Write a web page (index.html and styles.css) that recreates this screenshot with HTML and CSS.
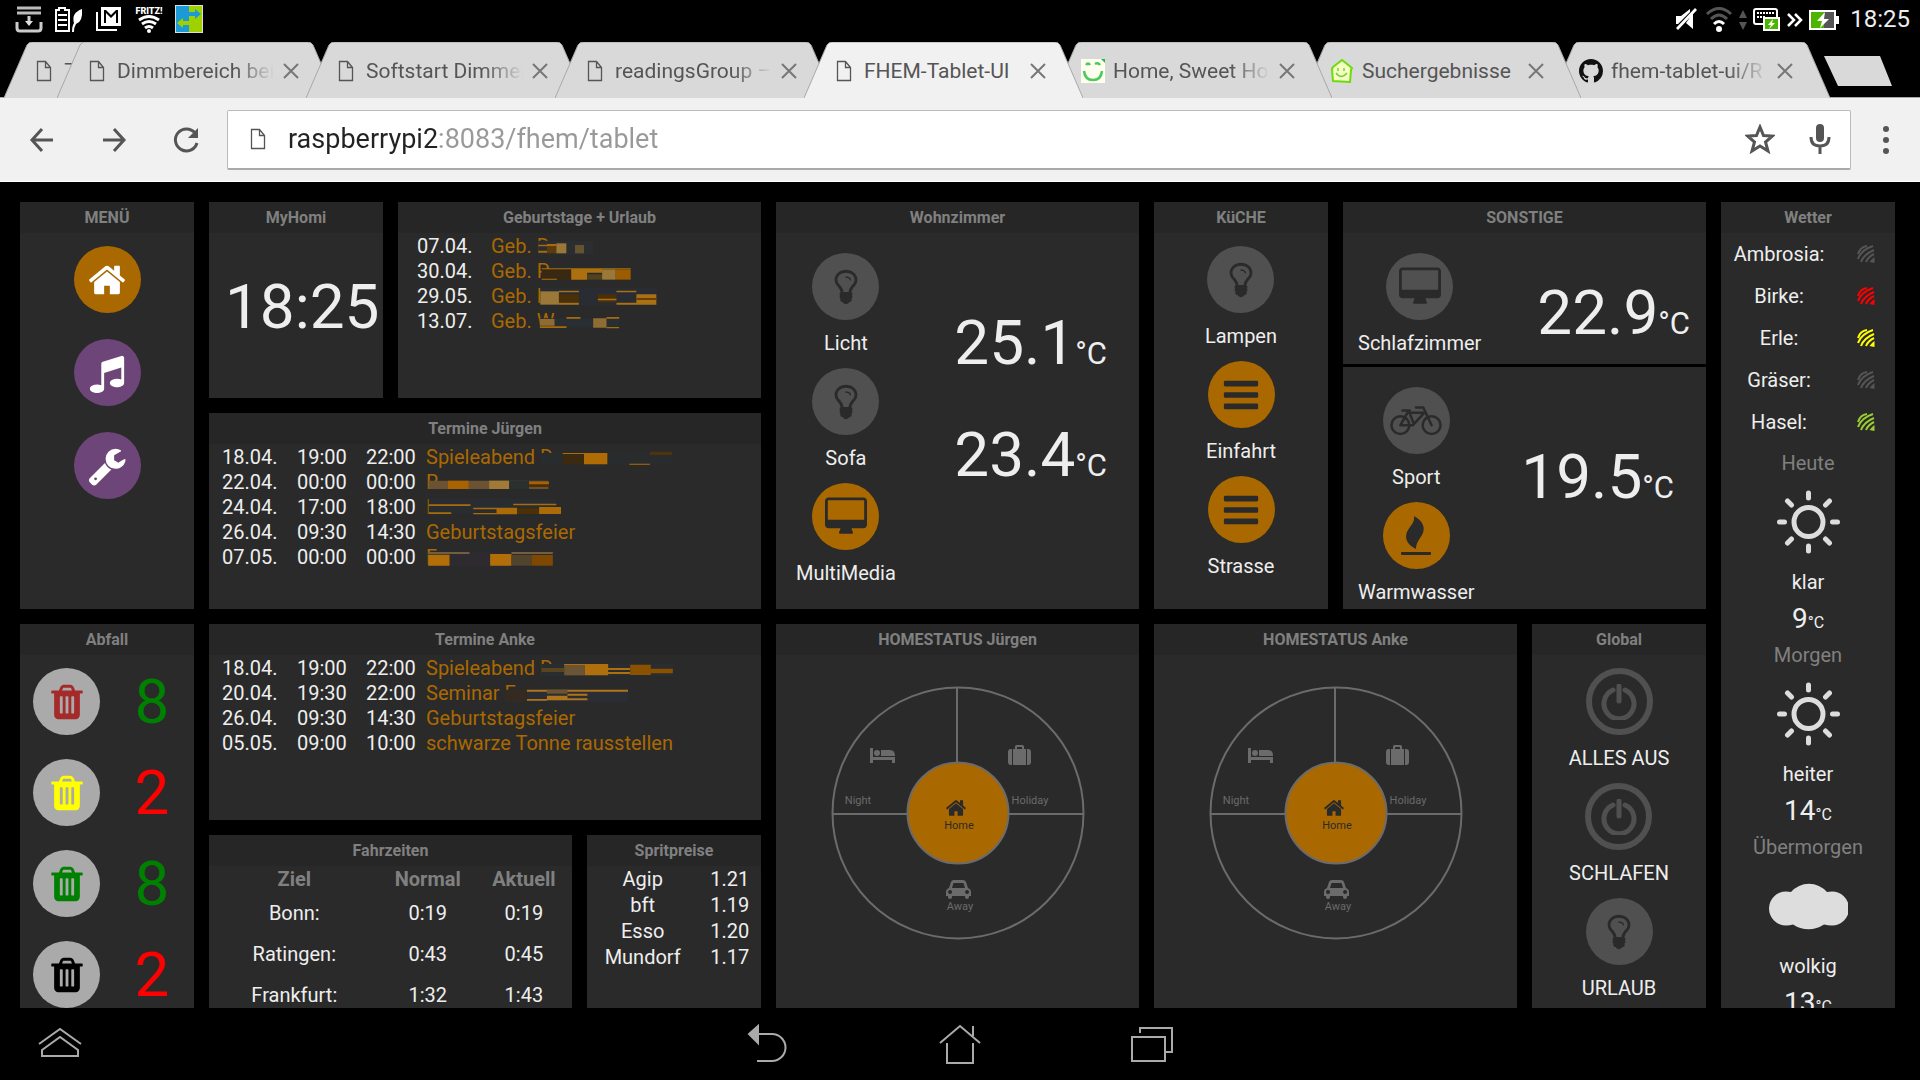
FILE: index.html
```html
<!DOCTYPE html>
<html lang="de">
<head>
    <meta charset="UTF-8">
    <meta name="viewport" content="width=device-width, initial-scale=1.0">
    <title>FHEM-Tablet-UI</title>
    <link rel="stylesheet" href="styles.css">
</head>
<body>
    <!-- icon sprite -->
    <svg class="sprite" aria-hidden="true">
        <symbol id="i-home" viewBox="0 0 1792 1792"><path d="M1472 992v480q0 26-19 45t-45 19h-384v-384h-256v384h-384q-26 0-45-19t-19-45v-480q0-1 .5-3t.5-3l575-474 575 474q1 2 1 6zm223-69l-62 74q-8 9-21 11h-3q-13 0-21-7l-692-577-692 577q-12 8-24 7-13-2-21-11l-62-74q-8-10-7-23.5t11-21.5l719-599q32-26 76-26t76 26l244 204v-195q0-14 9-23t23-9h192q14 0 23 9t9 23v408l219 182q10 8 11 21.5t-7 23.5z"/></symbol>
        <symbol id="i-music" viewBox="0 0 1792 1792"><path d="M1664 224v1120q0 50-34 89t-86 60.5-103.5 32-96.5 10.5-96.5-10.5-103.5-32-86-60.5-34-89 34-89 86-60.5 103.5-32 96.5-10.5q105 0 192 39v-537l-768 237v709q0 50-34 89t-86 60.5-103.5 32-96.5 10.5-96.5-10.5-103.5-32-86-60.5-34-89 34-89 86-60.5 103.5-32 96.5-10.5q105 0 192 39v-967q0-31 19-56.5t49-35.5l832-256q12-4 28-4 40 0 68 28t28 68z"/></symbol>
        <symbol id="i-wrench" viewBox="0 0 1792 1792"><path d="M448 1472q0-26-19-45t-45-19-45 19-19 45 19 45 45 19 45-19 19-45zm644-420l-682 682q-37 37-90 37-52 0-91-37l-106-108q-38-36-38-90 0-53 38-91l681-681q39 98 114.5 173.5t173.5 114.5zm634-435q0 39-23 106-47 134-164.5 217.5t-258.5 83.5q-185 0-316.5-131.5t-131.5-316.5 131.5-316.5 316.5-131.5q58 0 121.5 16.5t107.5 46.5q16 11 16 28t-16 28l-293 169v224l193 107q5-3 79-48.5t135.5-81 70.5-35.5q15 0 23.5 10t8.5 25z"/></symbol>
        <symbol id="i-bulb" viewBox="0 0 1792 1792"><path d="M1120 576q0 13-9.5 22.5t-22.5 9.5-22.5-9.5-9.5-22.5q0-46-54-71t-106-25q-13 0-22.5-9.5t-9.5-22.5 9.5-22.5 22.5-9.5q50 0 99.5 16t87 54 37.5 90zm160 0q0-72-34.5-134t-90-101.5-123-62-136.5-22.5-136.5 22.5-123 62-90 101.5-34.5 134q0 101 68 180 10 11 30.5 33t30.5 33q128 153 141 298h228q13-145 141-298 10-11 30.5-33t30.5-33q68-79 68-180zm128 0q0 155-103 268-45 49-74.5 87t-59.5 95.5-34 107.5q47 28 47 82 0 37-25 64 25 27 25 64 0 52-45 81 13 23 13 47 0 46-31.5 71t-77.5 25q-20 44-60 70t-87 26-87-26-60-70q-46 0-77.5-25t-31.5-71q0-24 13-47-45-29-45-81 0-37 25-64-25-27-25-64 0-54 47-82-4-50-34-107.5t-59.5-95.5-74.5-87q-103-113-103-268 0-99 44.5-184.5t117-142 164-89 186.5-32.5 186.5 32.5 164 89 117 142 44.5 184.5z"/></symbol>
        <symbol id="i-desktop" viewBox="-64 0 1920 1792"><path d="M1728 992v-832q0-13-9.5-22.5t-22.5-9.5h-1600q-13 0-22.5 9.5t-9.5 22.5v832q0 13 9.5 22.5t22.5 9.5h1600q13 0 22.5-9.5t9.5-22.5zm128-832v1088q0 66-47 113t-113 47h-544q0 37 16 77.5t32 71 16 43.5q0 26-19 45t-45 19h-512q-26 0-45-19t-19-45q0-14 16-44t32-70 16-78h-544q-66 0-113-47t-47-113v-1088q0-66 47-113t113-47h1600q66 0 113 47t47 113z"/></symbol>
        <symbol id="i-bars" viewBox="0 0 1792 1792"><rect x="128" y="256" width="1536" height="256" rx="60"/><rect x="128" y="768" width="1536" height="256" rx="60"/><rect x="128" y="1280" width="1536" height="256" rx="60"/></symbol>
        <symbol id="i-trash" viewBox="0 0 1792 1792"><path d="M704 1376v-704q0-14-9-23t-23-9h-64q-14 0-23 9t-9 23v704q0 14 9 23t23 9h64q14 0 23-9t9-23zm256 0v-704q0-14-9-23t-23-9h-64q-14 0-23 9t-9 23v704q0 14 9 23t23 9h64q14 0 23-9t9-23zm256 0v-704q0-14-9-23t-23-9h-64q-14 0-23 9t-9 23v704q0 14 9 23t23 9h64q14 0 23-9t9-23zm-544-992h448l-48-117q-7-9-17-11h-317q-10 2-17 11zm928 32v64q0 14-9 23t-23 9h-96v948q0 83-47 143.5t-113 60.5h-832q-66 0-113-58.5t-47-141.5v-952h-96q-14 0-23-9t-9-23v-64q0-14 9-23t23-9h309l70-167q15-37 54-63t79-26h320q40 0 79 26t54 63l70 167h309q14 0 23 9t9 23z"/></symbol>
        <symbol id="i-bike" viewBox="0 0 50 40"><g fill="none" stroke="currentColor" stroke-width="2.4" stroke-linejoin="round" stroke-linecap="round"><circle cx="10" cy="24" r="8.6"/><circle cx="40" cy="24" r="8.6"/><path d="M10 24h12l12-13M10 24l8-14 5 13M12 10h7M20 12h14M40 24l-8-17h-7"/></g></symbol>
        <symbol id="i-fire" viewBox="0 0 40 40"><path d="M18 0c9 5 12 12 8 19-3 5-6 8-6 14C10 28 8 21 12 14c3-5 7-8 6-14z"/><rect x="5" y="36" width="30" height="3" rx="1"/></symbol>
        <symbol id="i-power" viewBox="0 0 36 36"><path d="M12 6a15 15 0 1 0 12 0M18 2v15" fill="none" stroke="currentColor" stroke-width="5" stroke-linecap="round"/></symbol>
        <symbol id="i-bed" viewBox="0 0 25 16"><path d="M0 1h3v9h22v6h-3v-3H3v3H0z"/><circle cx="7" cy="6" r="3"/><path d="M11 3h9q5 0 5 6H11z"/></symbol>
        <symbol id="i-suitcase" viewBox="0 0 23 20"><path d="M7 4V1.500Q7 0 8.500 0h6Q16 0 16 1.500V4h2v16H5V4zM9 4h5V2H9zM0 7q0-3 3-3h1v16H3q-3 0-3-3zM23 7q0-3-3-3h-1v16h1q3 0 3-3z"/></symbol>
        <symbol id="i-car" viewBox="0 0 25 19"><path fill-rule="evenodd" d="M3 8l2-6q.6-2 3-2h9q2.400 0 3 2l2 6q3 1 3 4v4h-2v1q0 2-2 2t-2-2v-1H6v1q0 2-2 2t-2-2v-1H0v-4q0-3 3-4zm3 0h13l-1.500-5h-10zM4 10a2 2 0 1 0 .1 0zm17 0a2 2 0 1 0 .1 0z"/></symbol>
        <symbol id="i-pollen" viewBox="0 0 18 18"><path d="M1 9Q3 2 10 1M1 14Q4 5 16 1M4 17Q7 9 17 5M9 17Q11 12 17 9" fill="none" stroke="currentColor" stroke-width="2"/><path d="M17.500 12v6l-5-1q2-3 5-5z"/></symbol>
        <symbol id="i-sun" viewBox="0 0 64 64"><g fill="none" stroke="currentColor" stroke-width="5" stroke-linecap="round"><circle cx="32" cy="32" r="14.500"/><path d="M32 3v5M32 56v5M3 32h5M56 32h5M11 11l4 4M49 49l4 4M53 11l-4 4M15 49l-4 4"/></g></symbol>
        <symbol id="i-cloud" viewBox="0 0 79 49"><path d="M17 10q3 0 5 .5a24 24 0 0 1 36 0q2-.5 5-.5a17 17 0 0 1 0 34q-4 0-8-1a28 28 0 0 1-31 0q-3 1-7 1a17 17 0 0 1 0-34z"/></symbol>
        <symbol id="i-page" viewBox="0 0 24 24"><path d="M5.500 2.500h8l5 6v13h-13zM13.500 2.500v6h5" fill="none" stroke="currentColor" stroke-width="1.300"/></symbol>
        <symbol id="i-close" viewBox="0 0 18 18"><path d="M2 2l14 14M16 2L2 16" fill="none" stroke="currentColor" stroke-width="2"/></symbol>
        <symbol id="tab-shape" viewBox="0 0 279 56" preserveAspectRatio="none"><path d="M0 56L23 3q2-3 5-3h223q3 0 5 3l23 53" stroke="#a8a8a8"/></symbol>
    </svg>

    <header class="status-bar">
        <div class="status-icons status-left">
            <svg viewBox="0 0 28 28"><path d="M2 3h24M2 8h24" stroke="#bbb" stroke-width="3"/><path d="M2 17v6q0 3 3 3h18q3 0 3-3v-6M14 11v6" fill="none" stroke="#ccc" stroke-width="3"/><path d="M10 16h8l-4 5z" fill="#ddd"/></svg>
            <svg viewBox="0 0 28 28"><path d="M1 5h3V3h6v2h4v21H1zM3 10h9M3 15h9M3 20h9" fill="none" stroke="#fff" stroke-width="2"/><path d="M17 27q0-6 2-9-3-10 8-14 1 13-6 15-2 3-2 8z" fill="#fff"/></svg>
            <svg viewBox="0 0 28 28"><path d="M2 7v18h20" fill="none" stroke="#fff" stroke-width="2"/><path fill-rule="evenodd" fill="#fff" d="M6 2h20v19H6zm3 3v13h2V8l5 5 5-5v10h2V5h-2l-5 5-5-5z"/></svg>
            <svg viewBox="0 0 28 28"><text x="14" y="9" text-anchor="middle" class="fritz">FRITZ!</text><path d="M4 15q10-7 20 0M7 19q7-5 14 0M10 23q4-3 8 0" fill="none" stroke="#fff" stroke-width="3"/><circle cx="14" cy="26" r="2" fill="#fff"/></svg>
            <svg viewBox="0 0 28 28"><path fill="#ddd" d="M0 0h28v28H0z"/><path fill="#1c9ad6" d="M1 1h13v26H1z"/><path fill="#9fd000" d="M14 1h13v26H14z"/><path fill="#1c9ad6" d="M14 7h6V4l6 5-6 5v-3h-6z"/><path fill="#9fd000" d="M14 16H8v-3l-6 5 6 5v-3h6z"/></svg>
        </div>
        <div class="status-icons status-right">
            <svg class="mute" viewBox="0 0 24 24"><path fill="#fff" d="M1 9h5l9-7v3L3 17H1zM18 6v16l-7-6zM1 21L20 1l2 2L3 23z"/></svg>
            <svg viewBox="0 0 28 28"><path d="M2 9q12-11 24 0M6 14q8-8 16 0" fill="none" stroke="#555" stroke-width="3"/><path d="M9 19q5-5 10 0" fill="none" stroke="#fff" stroke-width="3"/><circle cx="14" cy="24" r="3" fill="#fff"/></svg>
            <svg class="narrow" viewBox="0 0 8 28"><path fill="#555" d="M0 13l4-8 4 8zM0 17h8l-4 8z"/></svg>
            <svg viewBox="0 0 28 28"><rect x="1" y="4" width="23" height="15" rx="2" fill="none" stroke="#fff" stroke-width="2"/><path d="M4 8h17M4 12h8" stroke="#fff" stroke-width="2" stroke-dasharray="2 1"/><path fill="#4db500" stroke="#fff" stroke-width="2" d="M11 13h15v12H11z"/><path fill="#fff" d="M20 14l-5 6h3l-2 4 6-6h-3z"/></svg>
            <svg class="small" viewBox="0 0 16 28"><path d="M1 9l6 6-6 6M8 9l6 6-6 6" fill="none" stroke="#fff" stroke-width="2.500"/></svg>
            <svg class="wide" viewBox="0 0 30 28"><path fill="#555" d="M1 6h25v18H1z"/><path fill="#4db500" d="M1 6h14v18H1z"/><path fill="none" stroke="#fff" stroke-width="2" d="M1 6h25v18H1z"/><path fill="#fff" d="M27 11h3v8h-3zM16 7l-8 9h5l-2 7 9-9h-5z"/></svg>
            <time class="status-time">18:25</time>
        </div>
    </header>

    <nav class="tabs">
        <div class="tab tab-stacked"><svg class="tab-bg"><use href="#tab-shape"/></svg><svg class="favicon"><use href="#i-page"/></svg><span class="tab-title">7</span></div>
        <div class="tab"><svg class="tab-bg"><use href="#tab-shape"/></svg><svg class="favicon"><use href="#i-page"/></svg><span class="tab-title faded">Dimmbereich bei</span><button class="tab-close" aria-label="Schließen"><svg><use href="#i-close"/></svg></button></div>
        <div class="tab"><svg class="tab-bg"><use href="#tab-shape"/></svg><svg class="favicon"><use href="#i-page"/></svg><span class="tab-title faded">Softstart Dimmer</span><button class="tab-close" aria-label="Schließen"><svg><use href="#i-close"/></svg></button></div>
        <div class="tab"><svg class="tab-bg"><use href="#tab-shape"/></svg><svg class="favicon"><use href="#i-page"/></svg><span class="tab-title faded">readingsGroup –</span><button class="tab-close" aria-label="Schließen"><svg><use href="#i-close"/></svg></button></div>
        <div class="tab tab-active"><svg class="tab-bg"><use href="#tab-shape"/></svg><svg class="favicon"><use href="#i-page"/></svg><span class="tab-title">FHEM-Tablet-UI</span><button class="tab-close" aria-label="Schließen"><svg><use href="#i-close"/></svg></button></div>
        <div class="tab tab-after-1"><svg class="tab-bg"><use href="#tab-shape"/></svg><svg class="favicon" viewBox="0 0 24 24"><path fill="#fffff0" d="M0 0h24v24H0z"/><path d="M3 12q1 9 9 9t9-9M5 6q2-3 4 0M14 5q3-2 5 1" fill="none" stroke="#4cc95c" stroke-width="2.500"/><path fill="#2db84d" d="M20 0h4v4z"/></svg><span class="tab-title faded">Home, Sweet Ho</span><button class="tab-close" aria-label="Schließen"><svg><use href="#i-close"/></svg></button></div>
        <div class="tab tab-after-2"><svg class="tab-bg"><use href="#tab-shape"/></svg><svg class="favicon" viewBox="0 0 24 24"><path d="M3 8l9-7 10 8-1 2-1 12-17-1-1-12z" fill="#f4ffc0" stroke="#6ddb13" stroke-width="2"/><path d="M6 14q5 7 11 0M8 9v3M14 9v3" fill="none" stroke="#7acb4a" stroke-width="1.500"/></svg><span class="tab-title">Suchergebnisse</span><button class="tab-close" aria-label="Schließen"><svg><use href="#i-close"/></svg></button></div>
        <div class="tab tab-after-3"><svg class="tab-bg"><use href="#tab-shape"/></svg><svg class="favicon" viewBox="0 0 16 16"><path fill="#111" d="M8 0C3.580 0 0 3.580 0 8c0 3.540 2.290 6.530 5.470 7.590.4.070.550-.170.550-.380 0-.190-.010-.820-.010-1.490-2.010.370-2.530-.490-2.690-.940-.090-.230-.480-.940-.820-1.130-.280-.150-.680-.520-.010-.530.630-.010 1.080.580 1.230.820.720 1.210 1.870.870 2.330.660.070-.520.280-.870.510-1.070-1.780-.2-3.640-.890-3.640-3.950 0-.870.310-1.590.820-2.150-.080-.2-.360-1.020.080-2.120 0 0 .670-.210 2.200.820.640-.180 1.320-.270 2-.270s1.360.090 2 .270c1.530-1.040 2.200-.820 2.200-.820.440 1.100.160 1.920.080 2.120.510.560.820 1.270.820 2.150 0 3.070-1.870 3.750-3.650 3.950.290.250.540.730.540 1.480 0 1.070-.010 1.930-.010 2.200 0 .210.150.460.550.380A8.010 8.010 0 0 0 16 8c0-4.420-3.580-8-8-8z"/></svg><span class="tab-title faded">fhem-tablet-ui/R</span><button class="tab-close" aria-label="Schließen"><svg><use href="#i-close"/></svg></button></div>
        <button class="new-tab" aria-label="Neuer Tab"></button>
    </nav>

    <div class="toolbar">
        <button class="tool-button" aria-label="Zurück"><svg viewBox="0 0 24 24"><path d="M23 12H2M12 1L2 12l10 11"/></svg></button>
        <button class="tool-button" aria-label="Vor"><svg viewBox="0 0 24 24"><path d="M1 12h21M12 1l10 11-10 11"/></svg></button>
        <button class="tool-button" aria-label="Neu laden"><svg viewBox="0 0 24 24"><path d="M21 5A11 11 0 1 0 23 15"/><path class="solid" d="M24 0v10H14z"/></svg></button>
        <label class="omnibox">
            <svg class="favicon"><use href="#i-page"/></svg>
            <input class="url" type="text" value="raspberrypi2:8083/fhem/tablet" aria-label="Adresse">
            <button class="omni-button" aria-label="Lesezeichen"><svg viewBox="0 0 30 30"><path d="M15 3l3.500 8.500 9 .5-7 6 2.500 9-8-5-8 5 2.500-9-7-6 9-.5z"/></svg></button>
            <button class="omni-button" aria-label="Spracheingabe"><svg viewBox="0 0 30 30"><rect class="solid" x="11" y="0" width="8" height="18" rx="4"/><path d="M6 13q0 9 9 9t9-9M15 22v8"/></svg></button>
        </label>
        <button class="tool-button menu-button" aria-label="Menü"><svg viewBox="0 0 24 24"><circle cx="12" cy="1" r="3"/><circle cx="12" cy="12" r="3"/><circle cx="12" cy="23" r="3"/></svg></button>
    </div>

    <main class="dashboard">
        <section class="panel menu">
            <h2>MENÜ</h2>
            <div class="menu-list">
                <button class="circle on white" aria-label="Home"><svg><use href="#i-home"/></svg></button>
                <button class="circle purple white" aria-label="Musik"><svg><use href="#i-music"/></svg></button>
                <button class="circle purple white" aria-label="Einstellungen"><svg><use href="#i-wrench"/></svg></button>
            </div>
        </section>

        <section class="panel clock">
            <h2>MyHomi</h2>
            <time class="big">18:25</time>
        </section>

        <section class="panel birthdays">
            <h2>Geburtstage + Urlaub</h2>
            <table class="dates">
                <tr><td>07.04.</td><td class="event">Geb. <span class="masked">D<svg viewBox="0 0 168 75" width="56" height="25"><path fill="#2b2d31" d="M4 20h164v42H4z"/><path fill="#a86b0c" d="M4 32h26v5H4zM4 50h26v6H4zM30 30h28v6H30z"/><path fill="#5b3c0d" d="M30 36h28v22H30z"/><path fill="#9c7838" d="M58 28h30v30H58z"/><path fill="#655330" d="M114 33h27v25h-27z"/></svg></span></td></tr>
                <tr><td>30.04.</td><td class="event">Geb. <span class="masked">P<svg viewBox="0 0 283 75" width="94" height="25"><path fill="#392812" d="M14 30h89v32H14z"/><path fill="#ad700f" d="M14 28h268v3H14zM103 31h48v31h-48zM151 31h45v10h-45zM14 59h46v3H14z"/><path fill="#50411f" d="M151 46h45v16h-45z"/><path fill="#9c7838" d="M196 31h41v31h-41z"/><path fill="#9b5d00" d="M237 31h45v31h-45z"/></svg></span></td></tr>
                <tr><td>29.05.</td><td class="event">Geb. <span class="masked">L<svg viewBox="0 0 364 75" width="121" height="25"><path fill="#292c33" d="M10 12h350v52H10z"/><path fill="#9c7838" d="M10 22h56v40H10z"/><path fill="#4a3009" d="M66 31h60v24H66zM183 31h56v24h-56z"/><path fill="#a97114" d="M66 20h60v5H66zM66 56h60v6H66zM183 44h56v5h-56zM239 20h60v5h-60zM239 56h60v6h-60zM299 31h60v31h-60z"/><path fill="#6b3e02" d="M299 42h60v6h-60z"/></svg></span></td></tr>
                <tr><td>13.07.</td><td class="event">Geb. <span class="masked">W<svg viewBox="0 0 248 75" width="83" height="25"><path fill="#292e32" d="M8 28h238v28H8z"/><path fill="#8e6c32" d="M8 30h44v20H8zM168 28h40v28h-40z"/><path fill="#a86b0c" d="M8 52h80v5H8zM88 24h42v5H88zM208 24h38v5h-38zM208 54h38v4h-38z"/></svg></span></td></tr>
            </table>
        </section>

        <section class="panel agenda-juergen">
            <h2>Termine Jürgen</h2>
            <table class="dates agenda">
                <tr><td>18.04.</td><td>19:00</td><td>22:00</td><td class="event">Spieleabend <span class="masked">D<svg viewBox="0 0 396 75" width="132" height="25"><path fill="#292c2d" d="M2 24h394v36H2z"/><path fill="#3b2a0f" d="M68 28h64v30H68z"/><path fill="#b06c04" d="M68 24h134v3H68zM132 26h70v32h-70zM268 56h62v3h-62z"/><path fill="#4d3310" d="M330 20h66v10h-66z"/></svg></span></td></tr>
                <tr><td>22.04.</td><td>00:00</td><td>00:00</td><td class="event"><span class="masked">R<svg viewBox="0 0 370 75" width="123" height="25"><path fill="#6b5331" d="M8 32h360v25H8z"/><path fill="#a96200" d="M66 32h62v25H66zM310 35h60v8h-60z"/><path fill="#a07a36" d="M190 32h60v25h-60z"/><path fill="#2a302f" d="M250 32h60v25h-60z"/><path fill="#4f2e02" d="M310 43h60v8h-60z"/></svg></span></td></tr>
                <tr><td>24.04.</td><td>17:00</td><td>18:00</td><td class="event"><span class="masked">L<svg viewBox="0 0 406 75" width="135" height="25"><path fill="#292c30" d="M8 12h384v46H8z"/><path fill="#aa6b08" d="M8 28h126v5H8zM262 26h130v5H262zM8 52h68v5H8zM142 38h132v5H142zM212 43h62v15h-62zM142 54h70v4h-70zM340 36h66v21h-66z"/><path fill="#4c3104" d="M274 40h66v17h-66z"/></svg></span></td></tr>
                <tr><td>26.04.</td><td>09:30</td><td>14:30</td><td class="event">Geburtstagsfeier</td></tr>
                <tr><td>07.05.</td><td>00:00</td><td>00:00</td><td class="event"><span class="masked">F<svg viewBox="0 0 380 75" width="127" height="25"><path fill="#2d2b30" d="M6 22h374v42H6z"/><path fill="#8b7045" d="M6 22h124v4H6zM256 22h124v4H256z"/><path fill="#b26f09" d="M6 29h64v33H6zM192 27h64v35h-64z"/><path fill="#50442d" d="M256 30h60v32h-60z"/><path fill="#7e4800" d="M316 30h64v32h-64z"/></svg></span></td></tr>
            </table>
        </section>

        <section class="panel living">
            <h2>Wohnzimmer</h2>
            <div class="room">
                <div class="devices">
                    <button class="device"><span class="circle"><svg><use href="#i-bulb"/></svg></span>Licht</button>
                    <button class="device"><span class="circle"><svg><use href="#i-bulb"/></svg></span>Sofa</button>
                    <button class="device"><span class="circle on"><svg class="desktop"><use href="#i-desktop"/></svg></span>MultiMedia</button>
                </div>
                <div class="temps">
                    <div class="big">25.1<small>°C</small></div>
                    <div class="big">23.4<small>°C</small></div>
                </div>
            </div>
        </section>

        <section class="panel kitchen">
            <h2>KüCHE</h2>
            <div class="devices stack">
                <button class="device"><span class="circle"><svg><use href="#i-bulb"/></svg></span>Lampen</button>
                <button class="device"><span class="circle on"><svg><use href="#i-bars"/></svg></span>Einfahrt</button>
                <button class="device"><span class="circle on"><svg><use href="#i-bars"/></svg></span>Strasse</button>
            </div>
        </section>

        <div class="others">
            <section class="panel bedroom">
                <h2>SONSTIGE</h2>
                <div class="room">
                    <div class="devices">
                        <button class="device"><span class="circle"><svg class="desktop"><use href="#i-desktop"/></svg></span>Schlafzimmer</button>
                    </div>
                    <div class="temps">
                        <div class="big">22.9<small>°C</small></div>
                    </div>
                </div>
            </section>
            <section class="panel sport">
                <div class="room">
                    <div class="devices">
                        <button class="device"><span class="circle"><svg class="bike"><use href="#i-bike"/></svg></span>Sport</button>
                        <button class="device"><span class="circle on"><svg><use href="#i-fire"/></svg></span>Warmwasser</button>
                    </div>
                    <div class="temps">
                        <div class="big">19.5<small>°C</small></div>
                    </div>
                </div>
            </section>
        </div>

        <section class="panel weather">
            <h2>Wetter</h2>
            <ul class="pollen">
                <li><span>Ambrosia:</span><svg class="level-0"><use href="#i-pollen"/></svg></li>
                <li><span>Birke:</span><svg class="level-3"><use href="#i-pollen"/></svg></li>
                <li><span>Erle:</span><svg class="level-2"><use href="#i-pollen"/></svg></li>
                <li><span>Gräser:</span><svg class="level-0"><use href="#i-pollen"/></svg></li>
                <li><span>Hasel:</span><svg class="level-1"><use href="#i-pollen"/></svg></li>
            </ul>
            <div class="forecast"><h3>Heute</h3><svg><use href="#i-sun"/></svg><p>klar</p><div class="degrees">9<small>°C</small></div></div>
            <div class="forecast"><h3>Morgen</h3><svg><use href="#i-sun"/></svg><p>heiter</p><div class="degrees">14<small>°C</small></div></div>
            <div class="forecast"><h3>Übermorgen</h3><svg><use href="#i-cloud"/></svg><p>wolkig</p><div class="degrees">13<small>°C</small></div></div>
        </section>

        <section class="panel trash">
            <h2>Abfall</h2>
            <ul class="bins">
                <li><span class="circle bin brown"><svg><use href="#i-trash"/></svg></span><span class="big ok">8</span></li>
                <li><span class="circle bin yellow"><svg><use href="#i-trash"/></svg></span><span class="big soon">2</span></li>
                <li><span class="circle bin green"><svg><use href="#i-trash"/></svg></span><span class="big ok">8</span></li>
                <li><span class="circle bin black"><svg><use href="#i-trash"/></svg></span><span class="big soon">2</span></li>
            </ul>
        </section>

        <section class="panel agenda-anke">
            <h2>Termine Anke</h2>
            <table class="dates agenda">
                <tr><td>18.04.</td><td>19:00</td><td>22:00</td><td class="event">Spieleabend <span class="masked">D<svg viewBox="0 0 398 75" width="133" height="25"><path fill="#2a2d2f" d="M4 24h394v36H4z"/><path fill="#58441f" d="M4 36h68v12H4z"/><path fill="#6b5433" d="M72 26h62v32H72z"/><path fill="#b06f0d" d="M72 24h132v3H72zM134 27h70v31h-70zM204 36h66v6h-66zM204 48h66v6h-66z"/><path fill="#8a5100" d="M270 26h62v31h-62zM332 38h66v14h-66z"/></svg></span></td></tr>
                <tr><td>20.04.</td><td>19:30</td><td>22:00</td><td class="event">Seminar <span class="masked">E<svg viewBox="0 0 370 75" width="123" height="25"><path fill="#342a22" d="M0 26h66v36H0z"/><path fill="#2a2d33" d="M66 26h304v36H66z"/><path fill="#b0741b" d="M66 26h304v6H66zM66 54h60v5H66zM126 44h62v14h-62zM188 38h60v6h-60zM188 52h60v6h-60z"/><path fill="#6b5433" d="M126 26h62v12h-62z"/></svg></span></td></tr>
                <tr><td>26.04.</td><td>09:30</td><td>14:30</td><td class="event">Geburtstagsfeier</td></tr>
                <tr><td>05.05.</td><td>09:00</td><td>10:00</td><td class="event">schwarze Tonne rausstellen</td></tr>
            </table>
        </section>

        <section class="panel travel">
            <h2>Fahrzeiten</h2>
            <table class="times">
                <tr><th>Ziel</th><th>Normal</th><th>Aktuell</th></tr>
                <tr><td>Bonn:</td><td>0:19</td><td>0:19</td></tr>
                <tr><td>Ratingen:</td><td>0:43</td><td>0:45</td></tr>
                <tr><td>Frankfurt:</td><td>1:32</td><td>1:43</td></tr>
            </table>
        </section>

        <section class="panel fuel">
            <h2>Spritpreise</h2>
            <table class="prices">
                <tr><td>Agip</td><td>1.21</td></tr>
                <tr><td>bft</td><td>1.19</td></tr>
                <tr><td>Esso</td><td>1.20</td></tr>
                <tr><td>Mundorf</td><td>1.17</td></tr>
            </table>
        </section>

        <section class="panel status-juergen">
            <h2>HOMESTATUS Jürgen</h2>
            <svg class="homestatus" viewBox="-127 -127 254 254">
                <circle r="125.500"/><path d="M-1-125V-51M-125 1H-51M51 1H125"/>
                <circle class="active" r="50.500"/>
                <use href="#i-bed" x="-88" y="-66" width="25" height="16"/>
                <use href="#i-suitcase" x="50" y="-68" width="23" height="20"/>
                <use class="dark" href="#i-home" x="-13" y="-16" width="22" height="22"/>
                <use href="#i-car" x="-12" y="67" width="25" height="19"/>
                <text x="-100" y="-9">Night</text><text x="72" y="-9">Holiday</text><text class="dark" x="1" y="16">Home</text><text x="2" y="97">Away</text>
            </svg>
        </section>

        <section class="panel status-anke">
            <h2>HOMESTATUS Anke</h2>
            <svg class="homestatus" viewBox="-127 -127 254 254">
                <circle r="125.500"/><path d="M-1-125V-51M-125 1H-51M51 1H125"/>
                <circle class="active" r="50.500"/>
                <use href="#i-bed" x="-88" y="-66" width="25" height="16"/>
                <use href="#i-suitcase" x="50" y="-68" width="23" height="20"/>
                <use class="dark" href="#i-home" x="-13" y="-16" width="22" height="22"/>
                <use href="#i-car" x="-12" y="67" width="25" height="19"/>
                <text x="-100" y="-9">Night</text><text x="72" y="-9">Holiday</text><text class="dark" x="1" y="16">Home</text><text x="2" y="97">Away</text>
            </svg>
        </section>

        <section class="panel global">
            <h2>Global</h2>
            <div class="devices stack">
                <button class="device"><span class="circle ring"><svg><use href="#i-power"/></svg></span>ALLES AUS</button>
                <button class="device"><span class="circle ring"><svg><use href="#i-power"/></svg></span>SCHLAFEN</button>
                <button class="device"><span class="circle"><svg><use href="#i-bulb"/></svg></span>URLAUB</button>
            </div>
        </section>
    </main>

    <footer class="nav-bar">
        <button aria-label="Apps"><svg viewBox="0 0 44 40"><path d="M1 20L22 5l21 15M4 26l18-13 18 13v6H4z"/></svg></button>
        <div class="nav-keys">
            <button aria-label="Zurück"><svg viewBox="0 0 44 40"><path d="M10 10h16a13 13 0 0 1 0 27H11"/><path class="solid" d="M12 2v17L3 10z"/></svg></button>
            <button aria-label="Startseite"><svg viewBox="0 0 44 40"><path d="M2 19L22 2l20 17M9 19v20h26V19M35 2v10"/></svg></button>
            <button aria-label="Übersicht"><svg viewBox="0 0 44 40"><path d="M2 13h33v24H2zM10 9V4h32v24h-6"/></svg></button>
        </div>
    </footer>
</body>
</html>
```

FILE: styles.css
```css
* {
    margin: 0;
    padding: 0;
    box-sizing: border-box;
}

body {
    height: 100vh;
    display: flex;
    flex-direction: column;
    overflow: hidden;
    background: #000;
    color: #eee;
    font-family: Roboto, "Noto Sans", sans-serif;
    font-size: 20px;
    line-height: 26px;
}

button {
    border: none;
    background: none;
    color: inherit;
    font: inherit;
    cursor: pointer;
}

ul {
    list-style: none;
}

svg {
    display: block;
    flex: none;
    fill: currentColor;
}

.sprite {
    position: absolute;
    width: 0;
    height: 0;
}

/* android status bar */
.status-bar {
    flex: none;
    height: 42px;
    padding: 0 10px 4px 15px;
    display: flex;
    align-items: center;
    justify-content: space-between;
}

.status-icons {
    display: flex;
    align-items: center;
}

.status-icons svg {
    width: 28px;
    height: 28px;
}

.status-left {
    gap: 12px;
}

.status-right {
    gap: 6px;
}

.status-icons .mute {
    width: 24px;
}

.status-icons .narrow {
    width: 8px;
}

.status-icons .small {
    width: 16px;
}

.status-icons .wide {
    width: 30px;
}

.fritz {
    font-size: 9px;
    font-weight: 900;
    fill: #fff;
}

.status-time {
    margin-left: 5px;
    font-size: 24px;
}

/* browser tabs */
.tabs {
    flex: none;
    height: 56px;
    padding-left: 4px;
    display: flex;
    border-bottom: 1px solid #a8a8a8;
}

.tab {
    position: relative;
    flex: none;
    width: 279px;
    height: 56px;
    margin-right: -30px;
    padding: 2px 36px 0 28px;
    display: flex;
    align-items: center;
    gap: 8px;
    color: #555;
}

.tab-bg {
    position: absolute;
    left: 0;
    top: 0;
    width: 100%;
    height: 100%;
    fill: #d9d9d9;
}

.tab-stacked {
    margin-right: -226px;
}

.tab-active {
    z-index: 4;
}

.tab-active .tab-bg {
    fill: #f1f1f1;
}

.tab-after-1 {
    z-index: 3;
}

.tab-after-2 {
    z-index: 2;
}

.tab-after-3 {
    z-index: 1;
}

.favicon {
    position: relative;
    width: 24px;
    height: 24px;
    color: #555;
}

.tab-title {
    position: relative;
    flex: 1;
    overflow: hidden;
    white-space: nowrap;
    font-size: 21px;
}

.faded {
    -webkit-mask-image: linear-gradient(90deg, #000 75%, transparent);
    mask-image: linear-gradient(90deg, #000 75%, transparent);
}

.tab-close {
    position: relative;
    color: #777;
}

.tab-close svg {
    width: 18px;
    height: 18px;
}

.new-tab {
    width: 68px;
    height: 30px;
    margin: 14px 0 0 24px;
    background: #d9d9d9;
    clip-path: polygon(0 0, 56px 0, 68px 100%, 14px 100%);
}

/* browser toolbar */
.toolbar {
    flex: none;
    height: 84px;
    padding: 0 4px 0 6px;
    display: flex;
    align-items: center;
    background: #f1f1f1;
    border-bottom: 1px solid #fff;
    color: #555;
}

.tool-button {
    width: 72px;
    height: 72px;
    display: grid;
    place-items: center;
}

.tool-button svg {
    width: 24px;
    height: 24px;
    overflow: visible;
    fill: none;
    stroke: #555;
    stroke-width: 3;
}

.tool-button .solid,
.omni-button .solid {
    fill: #555;
    stroke: none;
}

.menu-button {
    width: 60px;
}

.menu-button svg {
    fill: #555;
    stroke: none;
}

.omnibox {
    flex: 1;
    height: 60px;
    margin: 0 5px;
    padding: 0 0 0 18px;
    display: flex;
    align-items: center;
    background: #fff;
    border: 1px solid #bbb;
    border-bottom: 2px solid #aaa;
    border-radius: 2px;
}

/* host name dark, rest of the address light */
.url {
    flex: 1;
    min-width: 0;
    height: 40px;
    margin-left: 18px;
    border: none;
    outline: none;
    font-family: inherit;
    font-size: 27px;
    color: #999;
    background: linear-gradient(90deg, #222 152px, #999 152px);
    -webkit-background-clip: text;
    background-clip: text;
    -webkit-text-fill-color: transparent;
}

.omni-button {
    width: 60px;
    height: 58px;
    display: grid;
    place-items: center;
}

.omni-button svg {
    width: 30px;
    height: 30px;
    fill: none;
    stroke: #555;
    stroke-width: 3;
}

/* dashboard grid */
.dashboard {
    flex: 1;
    min-height: 0;
    overflow: hidden;
    padding: 20px 25px 0 20px;
    display: grid;
    grid-template-columns: repeat(10, minmax(0, 1fr));
    grid-template-rows: repeat(4, 196px);
    gap: 15px;
}

.panel {
    background: #2a2a2a;
    overflow: hidden;
}

.panel h2 {
    height: 31px;
    background: #262626;
    color: #808080;
    font-size: 16px;
    font-weight: bold;
    line-height: 31px;
    text-align: center;
}

.menu { grid-area: 1 / 1 / 3 / 2; }
.clock { grid-area: 1 / 2 / 2 / 3; }
.birthdays { grid-area: 1 / 3 / 2 / 5; }
.agenda-juergen { grid-area: 2 / 2 / 3 / 5; }
.living { grid-area: 1 / 5 / 3 / 7; }
.kitchen { grid-area: 1 / 7 / 3 / 8; }
.others { grid-area: 1 / 8 / 3 / 10; }
.weather { grid-area: 1 / 10 / 5 / 11; }
.trash { grid-area: 3 / 1 / 5 / 2; }
.agenda-anke { grid-area: 3 / 2 / 4 / 5; }
.travel { grid-area: 4 / 2 / 5 / 4; }
.fuel { grid-area: 4 / 4 / 5 / 5; }
.status-juergen { grid-area: 3 / 5 / 5 / 7; }
.status-anke { grid-area: 3 / 7 / 5 / 9; }
.global { grid-area: 3 / 9 / 5 / 10; }

/* round buttons */
.circle {
    width: 67px;
    height: 67px;
    flex: none;
    display: grid;
    place-items: center;
    border-radius: 50%;
    background: #505050;
    color: #2a2a2a;
}

.circle svg {
    width: 40px;
    height: 40px;
}

.circle .desktop {
    width: 42px;
}

.circle .bike {
    width: 52px;
    height: 42px;
}

.circle.on {
    background: #aa6900;
}

.circle.purple {
    background: #6e4578;
}

.circle.white {
    color: #fff;
}

.circle.ring {
    border: 6px solid #505050;
    background: none;
    color: #505050;
}

.circle.ring svg {
    width: 36px;
    height: 36px;
}

.menu-list {
    padding-top: 13px;
    display: flex;
    flex-direction: column;
    align-items: center;
    gap: 26px;
}

.big {
    font-size: 62px;
    line-height: 72px;
    white-space: nowrap;
}

.big small {
    font-size: 31px;
    line-height: 0;
}

.clock .big {
    display: block;
    padding: 38px 0 0 16px;
}

/* tables */
table {
    width: 100%;
    border-collapse: collapse;
    table-layout: fixed;
}

.dates {
    margin: 1px 0 0 19px;
}

.dates td {
    height: 25px;
    line-height: 25px;
    white-space: nowrap;
}

.dates td:first-child {
    width: 74px;
}

.dates .event {
    color: #aa6900;
}

.agenda {
    margin-left: 13px;
}

.agenda td:first-child {
    width: 75px;
}

.agenda td:nth-child(2) {
    width: 69px;
}

.agenda td:nth-child(3) {
    width: 60px;
}

.masked {
    position: relative;
}

.masked svg {
    position: absolute;
    left: 0;
    top: 0;
}

.times,
.prices {
    text-align: center;
}

.times th {
    color: #808080;
}

.times th:first-child {
    width: 47%;
}

.times td {
    height: 41px;
}

.prices td:first-child {
    width: 64%;
}

/* rooms */
.room {
    padding: 20px 32px 0 20px;
    display: flex;
    justify-content: space-between;
}

.devices {
    display: flex;
    flex-direction: column;
    align-items: center;
    gap: 12px;
}

.devices.stack {
    padding-top: 13px;
}

.device {
    display: flex;
    flex-direction: column;
    align-items: center;
    gap: 10px;
}

.temps {
    padding-top: 54px;
    display: flex;
    flex-direction: column;
    gap: 40px;
}

.others {
    display: flex;
    flex-direction: column;
    gap: 3px;
}

.bedroom .room {
    padding: 20px 16px 8px 15px;
}

.bedroom .temps {
    padding-top: 24px;
}

.sport {
    flex: 1;
}

.sport .room {
    padding: 20px 32px 0 15px;
}

/* weather */
.pollen li {
    height: 42px;
    display: grid;
    grid-template-columns: 2fr 1fr;
    place-items: center;
}

.pollen svg {
    width: 18px;
    height: 18px;
}

.level-0 { color: #555; }
.level-1 { color: #9acd32; }
.level-2 { color: #ff0; }
.level-3 { color: #f00; }

.forecast {
    text-align: center;
}

.forecast h3 {
    color: #808080;
    font-size: 20px;
    font-weight: normal;
    line-height: 40px;
}

.forecast svg {
    width: 79px;
    height: 64px;
    margin: 7px auto;
    color: #ddd;
}

.forecast p {
    line-height: 42px;
}

.degrees {
    font-size: 28px;
    line-height: 32px;
}

.degrees small {
    font-size: 16px;
    line-height: 0;
}

/* waste bins */
.bins {
    padding: 13px 0 0 13px;
    display: flex;
    flex-direction: column;
    gap: 24px;
}

.bins li {
    height: 67px;
    display: flex;
    align-items: center;
}

.bins .big {
    flex: 1;
    padding-left: 10px;
    text-align: center;
}

.circle.bin {
    background: #aaa;
}

.circle.brown { color: #a52a2a; }
.circle.yellow { color: #ff0; }
.circle.green { color: #008000; }
.circle.black { color: #000; }

.ok { color: #008000; }
.soon { color: #f00; }

/* home status dial */
.homestatus {
    width: 254px;
    height: 254px;
    margin: 31px auto 0;
    color: #6b6b6b;
}

.homestatus circle,
.homestatus > path {
    fill: none;
    stroke: #6b6b6b;
    stroke-width: 2;
}

.homestatus .active {
    fill: #aa6900;
}

.homestatus text {
    font-size: 11px;
    text-anchor: middle;
}

.homestatus .dark {
    fill: #2a2a2a;
}

/* android navigation bar */
.nav-bar {
    flex: none;
    height: 72px;
    padding: 0 38px;
    display: grid;
    grid-template-columns: 1fr auto 1fr;
    justify-items: start;
    align-items: center;
}

.nav-keys {
    display: flex;
    gap: 148px;
}

.nav-bar svg {
    width: 44px;
    height: 40px;
    fill: none;
    stroke: #aaa;
    stroke-width: 2;
}

.nav-bar .solid {
    fill: #aaa;
}
```
